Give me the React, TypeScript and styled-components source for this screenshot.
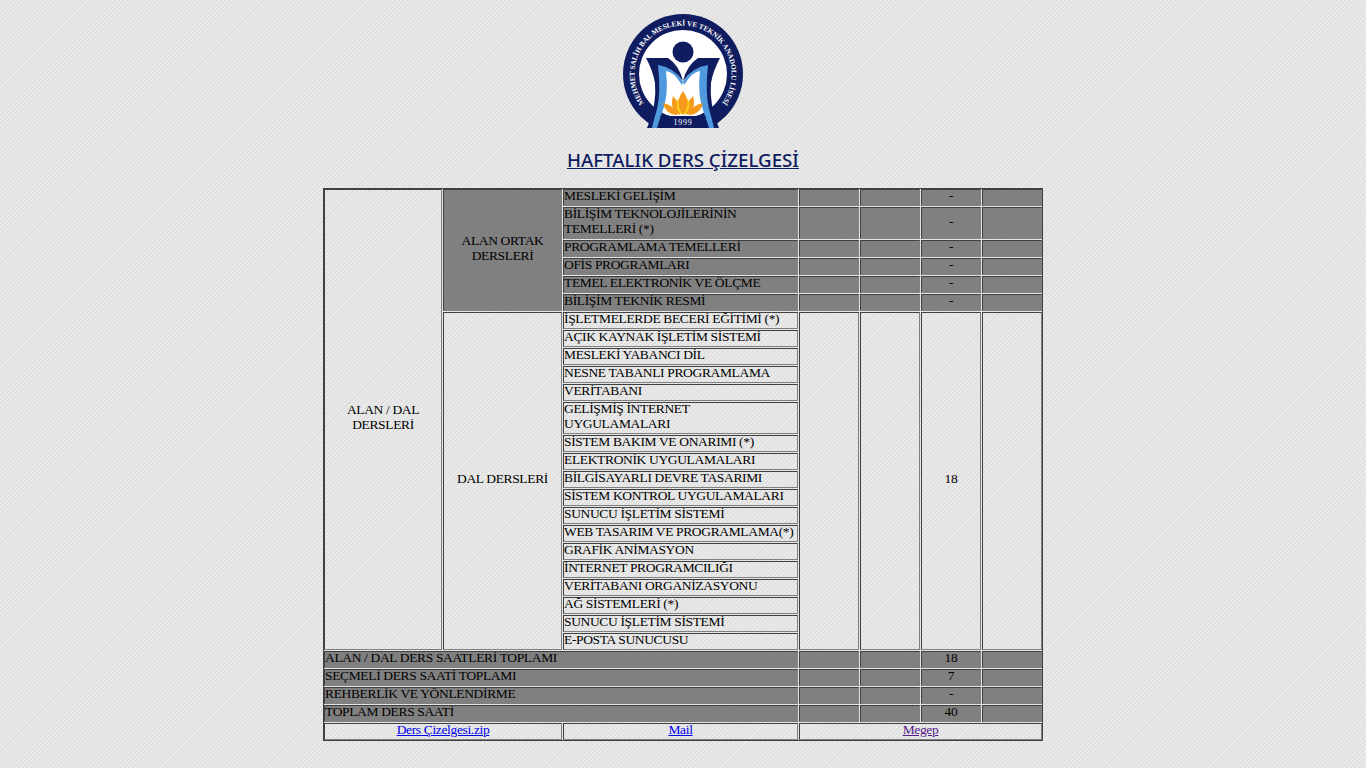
import React from 'react';
import styled, { createGlobalStyle, css } from 'styled-components';

const GlobalStyle = createGlobalStyle`
  html {
    min-height: 100%;
    background-color: #e5e5e5;
    background-image: repeating-linear-gradient(
      -45deg,
      #ebebeb 0px,
      #ebebeb 1.5px,
      #dfdfdf 1.5px,
      #dfdfdf 3px
    );
  }
  body {
    margin: 0;
    padding: 0;
  }
`;

const Page = styled.div`
  display: flex;
  flex-direction: column;
  align-items: center;
  padding-top: 13px;
  padding-bottom: 27px;
  font-family: "Liberation Serif", serif;
  font-size: 13.5px;
  line-height: 15px;
  letter-spacing: -0.35px;
  color: #000;
`;

const Logo = styled.svg`
  display: block;
  width: 124px;
  height: 116px;
`;

const Heading = styled.h1`
  margin: 19px 0 16px;
  font-family: "Noto Sans", sans-serif;
  font-size: 18.7px;
  line-height: 24px;
  font-weight: 500;
  letter-spacing: 0;
  color: #0f1c60;
  text-decoration: underline;
`;

const TableFrame = styled.div`
  box-sizing: border-box;
  width: 720px;
  border: 1px solid #404040;
  overflow: hidden;
`;

const Schedule = styled.table`
  width: 720px;
  margin: -1px;
  table-layout: fixed;
  border-spacing: 1px;
  border-collapse: separate;
`;

const Cell = styled.td<{ $gray?: boolean; $center?: boolean }>`
  padding: 0;
  border: 1px solid;
  border-color: #404040 #808080 #808080 #404040;
  vertical-align: middle;
  ${(p) =>
    p.$gray &&
    css`
      background: #808080;
    `}
  ${(p) =>
    p.$center &&
    css`
      text-align: center;
    `}
`;

/* the text sits a little above the middle of its cell in the original */
const CellText = styled.span<{ $lift?: number }>`
  display: block;
  margin-top: ${(p) => -(p.$lift ?? 2)}px;
  margin-bottom: ${(p) => p.$lift ?? 2}px;
`;

const EmptyLine = styled.span`
  display: block;
  height: 15px;
`;

const FileLink = styled.a`
  color: #0000ee;
  text-decoration: underline;
`;

const VisitedLink = styled(FileLink)`
  color: #551a8b;
`;

const columnWidths = [118, 119, 235, 60, 60, 60, 60];

const ortakDersler = [
  'MESLEKİ GELİŞİM',
  'BİLİŞİM TEKNOLOJİLERİNİN TEMELLERİ (*)',
  'PROGRAMLAMA TEMELLERİ',
  'OFİS PROGRAMLARI',
  'TEMEL ELEKTRONİK VE ÖLÇME',
  'BİLİŞİM TEKNİK RESMİ',
];

const dalDersleri = [
  'İŞLETMELERDE BECERİ EĞİTİMİ (*)',
  'AÇIK KAYNAK İŞLETİM SİSTEMİ',
  'MESLEKİ YABANCI DİL',
  'NESNE TABANLI PROGRAMLAMA',
  'VERİTABANI',
  'GELİŞMİŞ İNTERNET UYGULAMALARI',
  'SİSTEM BAKIM VE ONARIMI (*)',
  'ELEKTRONİK UYGULAMALARI',
  'BİLGİSAYARLI DEVRE TASARIMI',
  'SİSTEM KONTROL UYGULAMALARI',
  'SUNUCU İŞLETİM SİSTEMİ',
  'WEB TASARIM VE PROGRAMLAMA(*)',
  'GRAFİK ANİMASYON',
  'İNTERNET PROGRAMCILIĞI',
  'VERİTABANI ORGANİZASYONU',
  'AĞ SİSTEMLERİ (*)',
  'SUNUCU İŞLETİM SİSTEMİ',
  'E-POSTA SUNUCUSU',
];

const toplamlar = [
  { label: 'ALAN / DAL DERS SAATLERİ TOPLAMI', value: '18' },
  { label: 'SEÇMELİ DERS SAATİ TOPLAMI', value: '7' },
  { label: 'REHBERLİK VE YÖNLENDİRME', value: '-' },
  { label: 'TOPLAM DERS SAATİ', value: '40' },
];

const LogoHalf = () => (
  <>
    <path d="M37 52 Q50 50 62 69 L61 72 Q52 58 45 58 Q48 82 41 100 Q38 108 36 115 L28 115 Q38 95 37 52 Z" fill="#4f9ade" />
    <path d="M25 45 L47 45 Q58 52 62 68 Q52 54 37 52 Q40 80 36 96 Q33 106 31 115 L26 115 Q36 92 34 70 Q32 58 25 45 Z" fill="#0f1c60" />
    <path d="M52 83 Q60 91 59 102 Q48 97 52 83 Z" fill="#f59a1c" />
    <path d="M42 90 Q53 92 57 102 Q45 102 42 90 Z" fill="#f59a1c" />
    <path d="M57 85 Q62 94 61 102 Q53 97 57 85 Z" fill="#fdd017" />
  </>
);

const SchoolLogo = () => (
  <Logo viewBox="0 0 124 116" aria-label="Okul logosu">
    <defs>
      <clipPath id="logoCut">
        <rect x="0" y="0" width="124" height="115" />
      </clipPath>
      <path id="ringText" d="M 24 91.2 A 48.5 48.5 0 1 1 100 91.2" fill="none" />
    </defs>
    <g clipPath="url(#logoCut)">
      <circle cx="62" cy="61" r="60" fill="#0f1c60" />
      <circle cx="62" cy="61" r="44" fill="#fff" />
      <path d="M26 115 L98 115 L98 118 L26 118 Z" fill="#fff" />
      <LogoHalf />
      <g transform="matrix(-1 0 0 1 124 0)">
        <LogoHalf />
      </g>
      <circle cx="62" cy="39" r="10.5" fill="#0f1c60" />
      <path d="M62 78 Q71 90 62 102 Q53 90 62 78 Z" fill="#f59a1c" />
      <path d="M39 103 L85 103 Q82 111 77 114 L47 114 Q42 111 39 103 Z" fill="#0f1c60" />
      <text x="62" y="112" textAnchor="middle" fontFamily="Liberation Serif, serif" fontSize="8" fill="#fff" letterSpacing="0.8">1999</text>
      <text fontFamily="Liberation Serif, serif" fontSize="7.2" fontWeight="700" fill="#fff" letterSpacing="0">
        <textPath href="#ringText" startOffset="50%" textAnchor="middle">
          MEHMET SALİH BAL MESLEKİ VE TEKNİK ANADOLU LİSESİ
        </textPath>
      </text>
    </g>
  </Logo>
);

const App: React.FC = () => {
  return (
    <Page>
      <GlobalStyle />
      <SchoolLogo />
      <Heading>HAFTALIK DERS ÇİZELGESİ</Heading>
      <TableFrame>
        <Schedule>
          <colgroup>
            {columnWidths.map((w, i) => (
              <col key={i} width={w} />
            ))}
          </colgroup>
          <tbody>
            {ortakDersler.map((ders, i) => (
              <tr key={ders}>
                {i === 0 && (
                  <Cell rowSpan={24} $center>
                    <CellText $lift={3}>ALAN / DAL DERSLERİ</CellText>
                  </Cell>
                )}
                {i === 0 && (
                  <Cell rowSpan={6} $gray $center>
                    <CellText>ALAN ORTAK DERSLERİ</CellText>
                  </Cell>
                )}
                <Cell $gray>
                  <CellText>{ders}</CellText>
                </Cell>
                <Cell $gray />
                <Cell $gray />
                <Cell $gray $center>
                  <CellText>-</CellText>
                </Cell>
                <Cell $gray />
              </tr>
            ))}
            {dalDersleri.map((ders, i) => (
              <tr key={i}>
                {i === 0 && (
                  <Cell rowSpan={18} $center>
                    <CellText $lift={3}>DAL DERSLERİ</CellText>
                  </Cell>
                )}
                <Cell>
                  <CellText>{ders}</CellText>
                </Cell>
                {i === 0 && <Cell rowSpan={18} />}
                {i === 0 && <Cell rowSpan={18} />}
                {i === 0 && (
                  <Cell rowSpan={18} $center>
                    <CellText $lift={3}>18</CellText>
                  </Cell>
                )}
                {i === 0 && <Cell rowSpan={18} />}
              </tr>
            ))}
            {toplamlar.map((satir) => (
              <tr key={satir.label}>
                <Cell colSpan={3} $gray>
                  <CellText>{satir.label}</CellText>
                </Cell>
                <Cell $gray>
                  <EmptyLine />
                </Cell>
                <Cell $gray />
                <Cell $gray $center>
                  <CellText>{satir.value}</CellText>
                </Cell>
                <Cell $gray />
              </tr>
            ))}
            <tr>
              <Cell colSpan={2} $center>
                <CellText>
                  <FileLink href="#">Ders Çizelgesi.zip</FileLink>
                </CellText>
              </Cell>
              <Cell $center>
                <CellText>
                  <FileLink href="#">Mail</FileLink>
                </CellText>
              </Cell>
              <Cell colSpan={4} $center>
                <CellText>
                  <VisitedLink href="#">Megep</VisitedLink>
                </CellText>
              </Cell>
            </tr>
          </tbody>
        </Schedule>
      </TableFrame>
    </Page>
  );
};

export default App;
